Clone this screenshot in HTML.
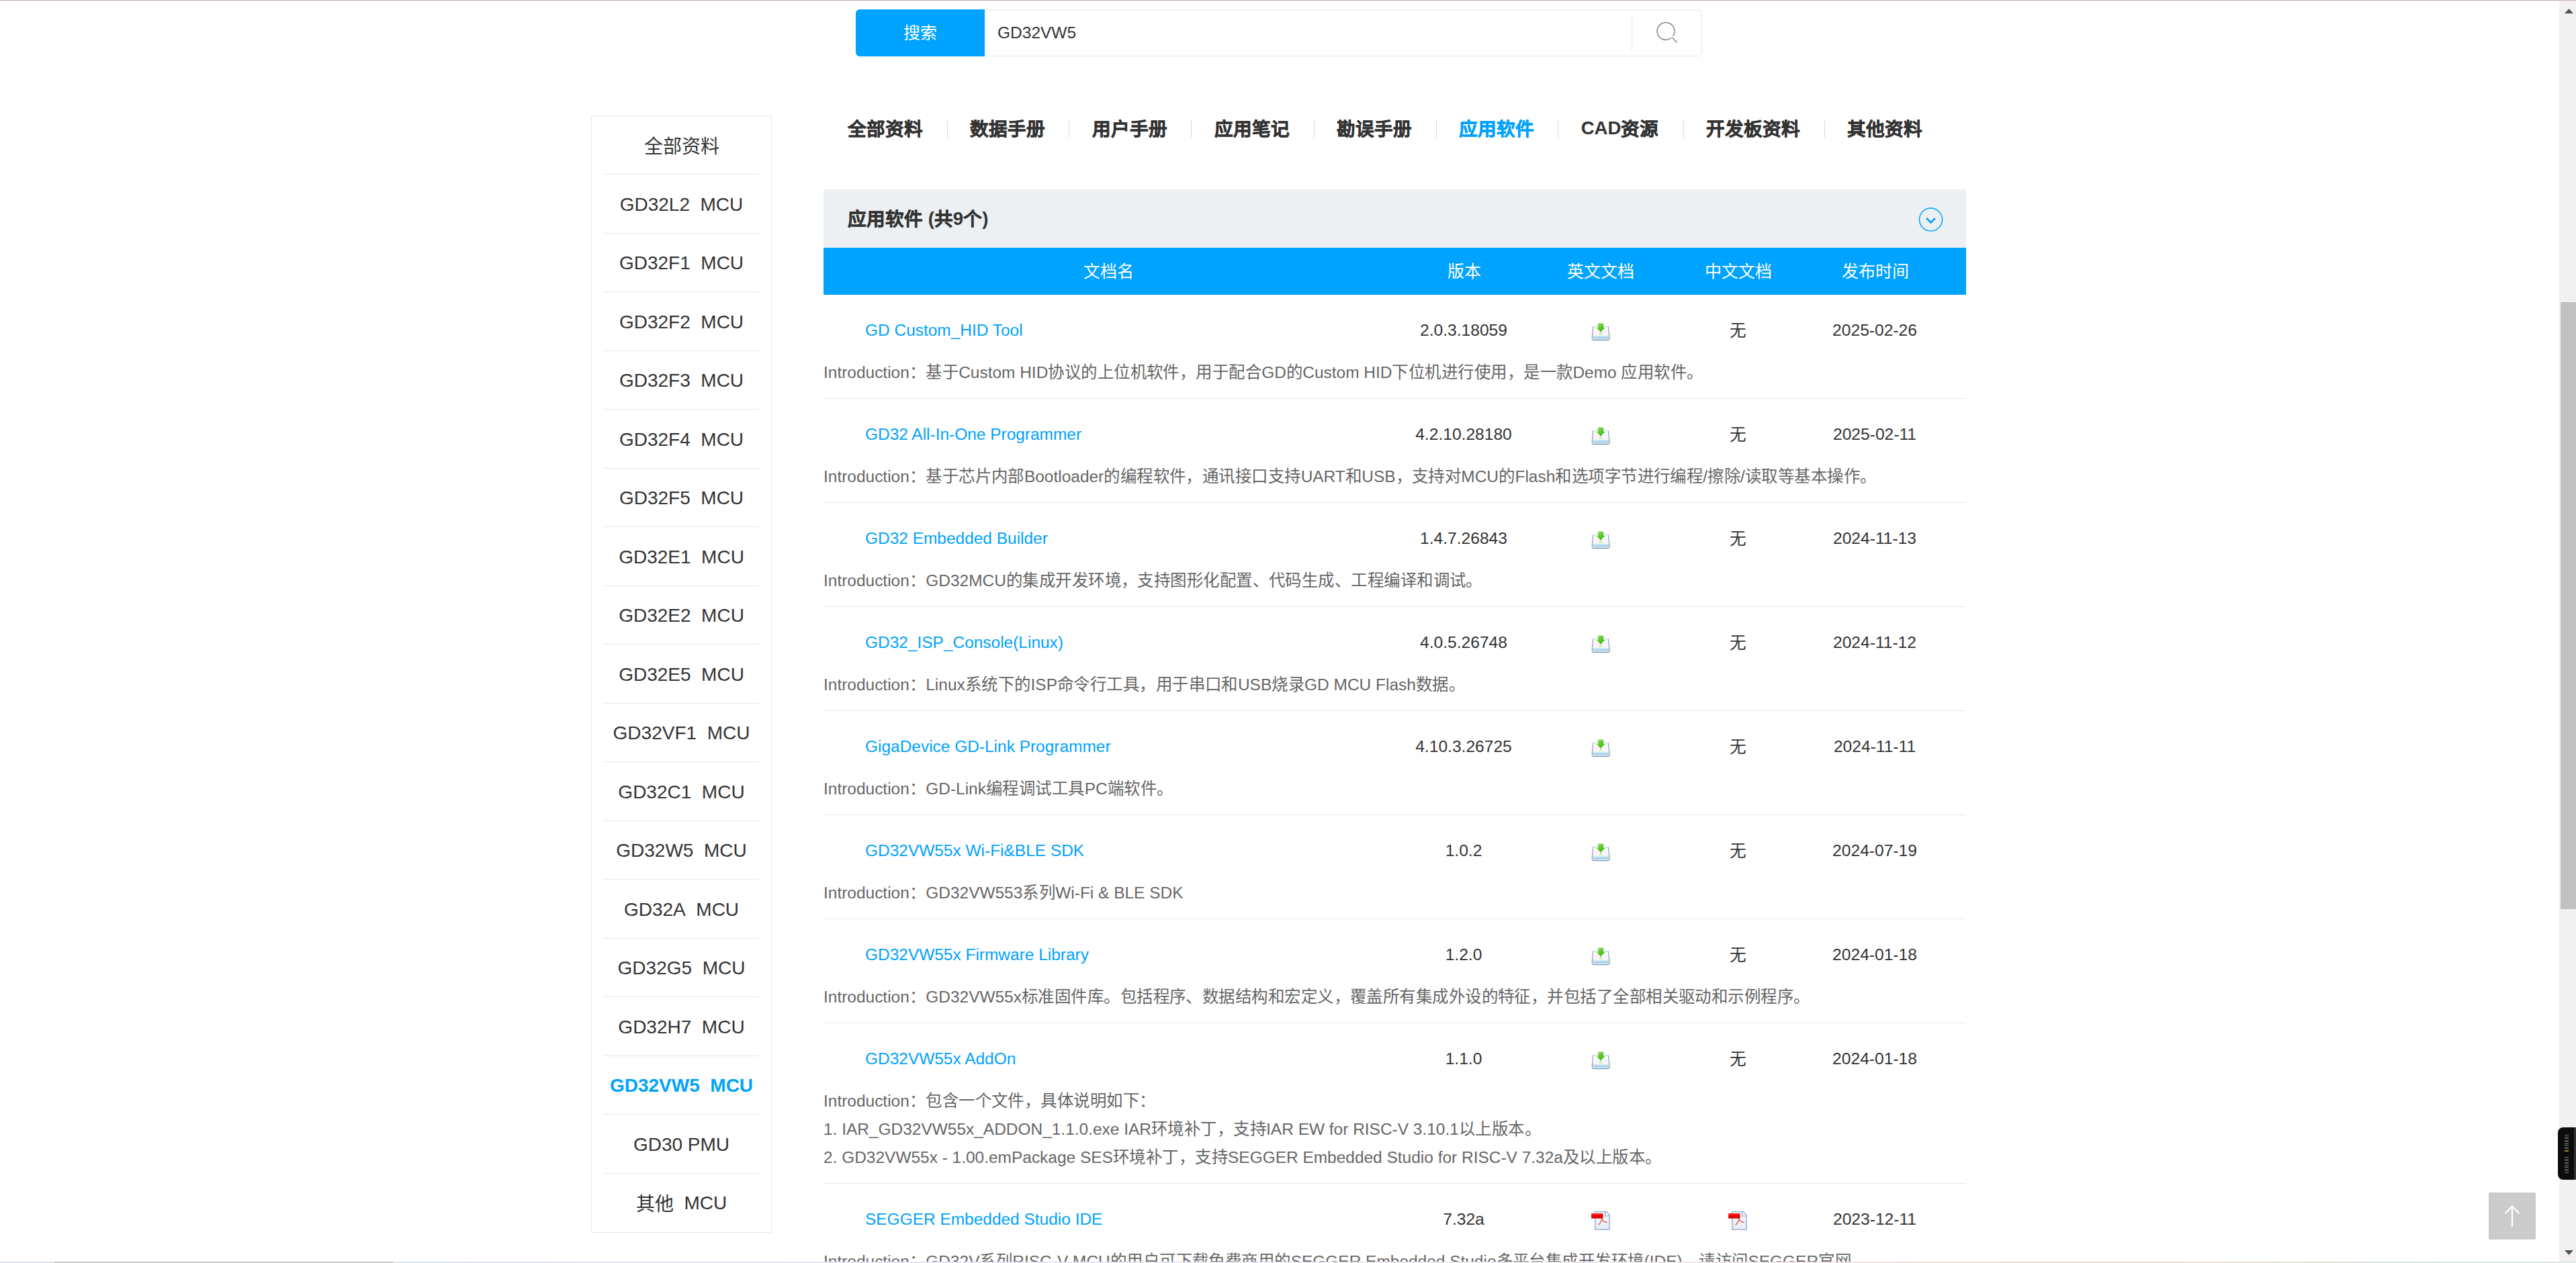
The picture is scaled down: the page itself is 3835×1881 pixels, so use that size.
<!DOCTYPE html>
<html lang="zh-CN"><head><meta charset="utf-8"><style>
html,body{margin:0;padding:0;}
body{width:3835px;height:1881px;overflow:hidden;position:relative;background:#fff;font-family:"Liberation Sans",sans-serif;color:#333;}
.a{position:absolute;white-space:nowrap;}
.c{text-align:center;}
</style></head><body>

<div class="a" style="left:1274px;top:14px;width:1258px;height:68px;border:1px solid #e6e6e6;border-radius:6px;"></div>
<div class="a" style="left:1274px;top:14px;width:192px;height:70px;background:#00a3ff;border-radius:6px 0 0 6px;"></div>
<div class="a c" style="left:1274px;top:14px;width:192px;height:70px;line-height:70px;font-size:25px;color:#fff">搜索</div>
<div class="a" style="left:1485px;top:14px;height:70px;line-height:70px;font-size:24.5px;color:#333">GD32VW5</div>
<div class="a" style="left:2429px;top:23px;width:1px;height:53px;background:#e6e6e6"></div>
<svg class="a" style="left:2450px;top:20px" width="60" height="60" viewBox="2450 20 60 60"><path d="M2490.6 53.7 A12.9 12.9 0 1 0 2488.1 56.4" fill="none" stroke="#8a8a8a" stroke-width="1.6"/><path d="M2489.2 55.8 L2496.6 63.3" stroke="#8a8a8a" stroke-width="1.6" fill="none"/></svg>
<div class="a" style="left:880px;top:172px;width:267px;height:1662px;border:1px solid #e6e6e6"></div>
<div class="a c" style="left:881px;top:173.0px;width:267px;height:87px;line-height:87.5px;font-size:28px;color:#333"><span style="position:relative;top:2px">全部资料</span></div>
<div class="a" style="left:898px;top:259px;width:232px;height:1px;background:#e6e6e6"></div>
<div class="a c" style="left:881px;top:260.5px;width:267px;height:87px;line-height:87.5px;font-size:28px;color:#333">GD32L2&nbsp; MCU</div>
<div class="a" style="left:898px;top:347px;width:232px;height:1px;background:#e6e6e6"></div>
<div class="a c" style="left:881px;top:348.0px;width:267px;height:87px;line-height:87.5px;font-size:28px;color:#333">GD32F1&nbsp; MCU</div>
<div class="a" style="left:898px;top:434px;width:232px;height:1px;background:#e6e6e6"></div>
<div class="a c" style="left:881px;top:435.5px;width:267px;height:87px;line-height:87.5px;font-size:28px;color:#333">GD32F2&nbsp; MCU</div>
<div class="a" style="left:898px;top:522px;width:232px;height:1px;background:#e6e6e6"></div>
<div class="a c" style="left:881px;top:523.0px;width:267px;height:87px;line-height:87.5px;font-size:28px;color:#333">GD32F3&nbsp; MCU</div>
<div class="a" style="left:898px;top:609px;width:232px;height:1px;background:#e6e6e6"></div>
<div class="a c" style="left:881px;top:610.5px;width:267px;height:87px;line-height:87.5px;font-size:28px;color:#333">GD32F4&nbsp; MCU</div>
<div class="a" style="left:898px;top:697px;width:232px;height:1px;background:#e6e6e6"></div>
<div class="a c" style="left:881px;top:698.0px;width:267px;height:87px;line-height:87.5px;font-size:28px;color:#333">GD32F5&nbsp; MCU</div>
<div class="a" style="left:898px;top:784px;width:232px;height:1px;background:#e6e6e6"></div>
<div class="a c" style="left:881px;top:785.5px;width:267px;height:87px;line-height:87.5px;font-size:28px;color:#333">GD32E1&nbsp; MCU</div>
<div class="a" style="left:898px;top:872px;width:232px;height:1px;background:#e6e6e6"></div>
<div class="a c" style="left:881px;top:873.0px;width:267px;height:87px;line-height:87.5px;font-size:28px;color:#333">GD32E2&nbsp; MCU</div>
<div class="a" style="left:898px;top:959px;width:232px;height:1px;background:#e6e6e6"></div>
<div class="a c" style="left:881px;top:960.5px;width:267px;height:87px;line-height:87.5px;font-size:28px;color:#333">GD32E5&nbsp; MCU</div>
<div class="a" style="left:898px;top:1047px;width:232px;height:1px;background:#e6e6e6"></div>
<div class="a c" style="left:881px;top:1048.0px;width:267px;height:87px;line-height:87.5px;font-size:28px;color:#333">GD32VF1&nbsp; MCU</div>
<div class="a" style="left:898px;top:1134px;width:232px;height:1px;background:#e6e6e6"></div>
<div class="a c" style="left:881px;top:1135.5px;width:267px;height:87px;line-height:87.5px;font-size:28px;color:#333">GD32C1&nbsp; MCU</div>
<div class="a" style="left:898px;top:1222px;width:232px;height:1px;background:#e6e6e6"></div>
<div class="a c" style="left:881px;top:1223.0px;width:267px;height:87px;line-height:87.5px;font-size:28px;color:#333">GD32W5&nbsp; MCU</div>
<div class="a" style="left:898px;top:1309px;width:232px;height:1px;background:#e6e6e6"></div>
<div class="a c" style="left:881px;top:1310.5px;width:267px;height:87px;line-height:87.5px;font-size:28px;color:#333">GD32A&nbsp; MCU</div>
<div class="a" style="left:898px;top:1397px;width:232px;height:1px;background:#e6e6e6"></div>
<div class="a c" style="left:881px;top:1398.0px;width:267px;height:87px;line-height:87.5px;font-size:28px;color:#333">GD32G5&nbsp; MCU</div>
<div class="a" style="left:898px;top:1484px;width:232px;height:1px;background:#e6e6e6"></div>
<div class="a c" style="left:881px;top:1485.5px;width:267px;height:87px;line-height:87.5px;font-size:28px;color:#333">GD32H7&nbsp; MCU</div>
<div class="a" style="left:898px;top:1572px;width:232px;height:1px;background:#e6e6e6"></div>
<div class="a c" style="left:881px;top:1573.0px;width:267px;height:87px;line-height:87.5px;font-size:28px;color:#00a2fc;font-weight:bold">GD32VW5&nbsp; MCU</div>
<div class="a" style="left:898px;top:1659px;width:232px;height:1px;background:#e6e6e6"></div>
<div class="a c" style="left:881px;top:1660.5px;width:267px;height:87px;line-height:87.5px;font-size:28px;color:#333">GD30 PMU</div>
<div class="a" style="left:898px;top:1747px;width:232px;height:1px;background:#e6e6e6"></div>
<div class="a c" style="left:881px;top:1748.0px;width:267px;height:87px;line-height:87.5px;font-size:28px;color:#333"><span style="position:relative;top:2px">其他</span>&nbsp; MCU</div>
<div class="a" style="left:1262px;top:171px;line-height:40px;font-size:27.6px;font-weight:bold;color:#333"><span style="-webkit-text-stroke:0.5px currentColor;position:relative;top:2px">全部资料</span></div>
<div class="a" style="left:1443.6px;top:171px;line-height:40px;font-size:27.6px;font-weight:bold;color:#333"><span style="-webkit-text-stroke:0.5px currentColor;position:relative;top:2px">数据手册</span></div>
<div class="a" style="left:1626px;top:171px;line-height:40px;font-size:27.6px;font-weight:bold;color:#333"><span style="-webkit-text-stroke:0.5px currentColor;position:relative;top:2px">用户手册</span></div>
<div class="a" style="left:1807.8px;top:171px;line-height:40px;font-size:27.6px;font-weight:bold;color:#333"><span style="-webkit-text-stroke:0.5px currentColor;position:relative;top:2px">应用笔记</span></div>
<div class="a" style="left:1989.6px;top:171px;line-height:40px;font-size:27.6px;font-weight:bold;color:#333"><span style="-webkit-text-stroke:0.5px currentColor;position:relative;top:2px">勘误手册</span></div>
<div class="a" style="left:2171.8px;top:171px;line-height:40px;font-size:27.6px;font-weight:bold;color:#00a2fc"><span style="-webkit-text-stroke:0.5px currentColor;position:relative;top:2px">应用软件</span></div>
<div class="a" style="left:2353.7px;top:171px;line-height:40px;font-size:27.6px;font-weight:bold;color:#333">CAD<span style="-webkit-text-stroke:0.5px currentColor;position:relative;top:2px">资源</span></div>
<div class="a" style="left:2540px;top:171px;line-height:40px;font-size:27.6px;font-weight:bold;color:#333"><span style="-webkit-text-stroke:0.5px currentColor;position:relative;top:2px">开发板资料</span></div>
<div class="a" style="left:2749.5px;top:171px;line-height:40px;font-size:27.6px;font-weight:bold;color:#333"><span style="-webkit-text-stroke:0.5px currentColor;position:relative;top:2px">其他资料</span></div>
<div class="a" style="left:1410px;top:179px;width:1px;height:26px;background:#d9d9d9"></div>
<div class="a" style="left:1591px;top:179px;width:1px;height:26px;background:#d9d9d9"></div>
<div class="a" style="left:1773px;top:179px;width:1px;height:26px;background:#d9d9d9"></div>
<div class="a" style="left:1956px;top:179px;width:1px;height:26px;background:#d9d9d9"></div>
<div class="a" style="left:2138px;top:179px;width:1px;height:26px;background:#d9d9d9"></div>
<div class="a" style="left:2319px;top:179px;width:1px;height:26px;background:#d9d9d9"></div>
<div class="a" style="left:2506px;top:179px;width:1px;height:26px;background:#d9d9d9"></div>
<div class="a" style="left:2716px;top:179px;width:1px;height:26px;background:#d9d9d9"></div>
<div class="a" style="left:1226px;top:282px;width:1701px;height:87px;background:#edf0f3"></div>
<div class="a" style="left:1262px;top:306px;line-height:40px;font-size:27.6px;font-weight:bold;color:#333"><span style="-webkit-text-stroke:0.5px currentColor;position:relative;top:0.5px">应用软件</span> (<span style="-webkit-text-stroke:0.5px currentColor;position:relative;top:0.5px">共</span>9<span style="-webkit-text-stroke:0.5px currentColor;position:relative;top:0.5px">个</span>)</div>
<svg class="a" style="left:2855px;top:308px" width="40" height="40" viewBox="0 0 40 40"><circle cx="19.5" cy="19" r="17" fill="none" stroke="#00a3ff" stroke-width="1.5"/><path d="M13 17 L19.5 23.5 L26 17" fill="none" stroke="#00a3ff" stroke-width="2.6"/></svg>
<div class="a" style="left:1226px;top:369px;width:1701px;height:70px;background:#00a3ff"></div>
<div class="a c" style="left:1500.5px;top:369px;width:300px;line-height:70px;font-size:25px;color:#fff">文档名</div>
<div class="a c" style="left:2029.5px;top:369px;width:300px;line-height:70px;font-size:25px;color:#fff">版本</div>
<div class="a c" style="left:2233px;top:369px;width:300px;line-height:70px;font-size:25px;color:#fff">英文文档</div>
<div class="a c" style="left:2438px;top:369px;width:300px;line-height:70px;font-size:25px;color:#fff">中文文档</div>
<div class="a c" style="left:2641.6px;top:369px;width:300px;line-height:70px;font-size:25px;color:#fff">发布时间</div>
<div class="a" style="left:1288px;top:471.7px;line-height:40px;font-size:24.46px;color:#00a2fc">GD Custom_HID Tool</div>
<div class="a c" style="left:2029px;top:471.7px;width:300px;line-height:40px;font-size:24.6px;color:#333">2.0.3.18059</div>
<div class="a" style="left:2360px;top:470px;width:45px;height:45px"><svg width="45" height="45" viewBox="0 0 45 45"><defs><linearGradient id="gA" x1="0" y1="0" x2="1" y2="1"><stop offset="0" stop-color="#a8ea6c"/><stop offset="0.5" stop-color="#5cc62c"/><stop offset="1" stop-color="#26a80c"/></linearGradient><linearGradient id="gT" x1="0" y1="0" x2="0" y2="1"><stop offset="0" stop-color="#ffffff"/><stop offset="1" stop-color="#eef1f4"/></linearGradient><linearGradient id="gR" x1="0" y1="0" x2="0" y2="1"><stop offset="0" stop-color="#6cc84a" stop-opacity="0.75"/><stop offset="1" stop-color="#c8eab0" stop-opacity="0"/></linearGradient></defs><path d="M12.3 16.6 H33.6 Q34.3 16.6 34.4 17.4 L36.2 33.6 Q36.4 36.6 33.4 36.6 H12.8 Q9.8 36.6 10.1 33.6 L11.6 17.4 Q11.7 16.6 12.3 16.6 Z" fill="url(#gT)"/><rect x="10.6" y="31" width="25.2" height="5" fill="#c8e6f4"/><path d="M11 31.2 H35.4" stroke="#a4d0e6" stroke-width="0.9"/><path d="M12.6 33.3 H33.8" stroke="#88b0cc" stroke-width="0.8"/><path d="M12.3 16.6 H33.6" stroke="#c4ccd8" stroke-width="1"/><path d="M33.6 16.6 Q34.3 16.6 34.4 17.4 L36.2 33.6 Q36.4 36.6 33.4 36.6 H12.8 Q9.8 36.6 10.1 33.6 L11.6 17.4 Q11.7 16.6 12.3 16.6" fill="none" stroke="#8497b0" stroke-width="1.1"/><path d="M16.5 23.4 H20 M26.5 23.4 H30" stroke="#f2b8b8" stroke-width="0.6"/><path d="M18 30.2 L23 24.6 L28 30.2 Z" fill="url(#gR)"/><path d="M18.9 11.4 H26.2 Q27.2 11.4 27.2 12.8 V18.4 L30.2 18.1 Q26.2 20.6 23 24.8 Q19.8 20.6 15.8 18.1 L18.9 18.4 Z" fill="url(#gA)"/></svg></div>
<div class="a c" style="left:2437px;top:471.7px;width:300px;line-height:40px;font-size:24.6px;color:#333"><span style="position:relative;top:1px">无</span></div>
<div class="a c" style="left:2641px;top:471.7px;width:300px;line-height:40px;font-size:24.6px;color:#333">2025-02-26</div>
<div class="a" style="left:1226px;top:533.7px;line-height:42px;font-size:24.46px;color:#666">Introduction<span style="letter-spacing:0.45px">：基于</span>Custom HID<span style="letter-spacing:0.45px">协议的上位机软件，用于配合</span>GD<span style="letter-spacing:0.45px">的</span>Custom HID<span style="letter-spacing:0.45px">下位机进行使用，是一款</span>Demo <span style="letter-spacing:0.45px">应用软件。</span></div>
<div class="a" style="left:1226px;top:593px;width:1701px;height:1px;background:#e6e6e6"></div>
<div class="a" style="left:1288px;top:626.7px;line-height:40px;font-size:24.46px;color:#00a2fc">GD32 All-In-One Programmer</div>
<div class="a c" style="left:2029px;top:626.7px;width:300px;line-height:40px;font-size:24.6px;color:#333">4.2.10.28180</div>
<div class="a" style="left:2360px;top:625px;width:45px;height:45px"><svg width="45" height="45" viewBox="0 0 45 45"><defs><linearGradient id="gA" x1="0" y1="0" x2="1" y2="1"><stop offset="0" stop-color="#a8ea6c"/><stop offset="0.5" stop-color="#5cc62c"/><stop offset="1" stop-color="#26a80c"/></linearGradient><linearGradient id="gT" x1="0" y1="0" x2="0" y2="1"><stop offset="0" stop-color="#ffffff"/><stop offset="1" stop-color="#eef1f4"/></linearGradient><linearGradient id="gR" x1="0" y1="0" x2="0" y2="1"><stop offset="0" stop-color="#6cc84a" stop-opacity="0.75"/><stop offset="1" stop-color="#c8eab0" stop-opacity="0"/></linearGradient></defs><path d="M12.3 16.6 H33.6 Q34.3 16.6 34.4 17.4 L36.2 33.6 Q36.4 36.6 33.4 36.6 H12.8 Q9.8 36.6 10.1 33.6 L11.6 17.4 Q11.7 16.6 12.3 16.6 Z" fill="url(#gT)"/><rect x="10.6" y="31" width="25.2" height="5" fill="#c8e6f4"/><path d="M11 31.2 H35.4" stroke="#a4d0e6" stroke-width="0.9"/><path d="M12.6 33.3 H33.8" stroke="#88b0cc" stroke-width="0.8"/><path d="M12.3 16.6 H33.6" stroke="#c4ccd8" stroke-width="1"/><path d="M33.6 16.6 Q34.3 16.6 34.4 17.4 L36.2 33.6 Q36.4 36.6 33.4 36.6 H12.8 Q9.8 36.6 10.1 33.6 L11.6 17.4 Q11.7 16.6 12.3 16.6" fill="none" stroke="#8497b0" stroke-width="1.1"/><path d="M16.5 23.4 H20 M26.5 23.4 H30" stroke="#f2b8b8" stroke-width="0.6"/><path d="M18 30.2 L23 24.6 L28 30.2 Z" fill="url(#gR)"/><path d="M18.9 11.4 H26.2 Q27.2 11.4 27.2 12.8 V18.4 L30.2 18.1 Q26.2 20.6 23 24.8 Q19.8 20.6 15.8 18.1 L18.9 18.4 Z" fill="url(#gA)"/></svg></div>
<div class="a c" style="left:2437px;top:626.7px;width:300px;line-height:40px;font-size:24.6px;color:#333"><span style="position:relative;top:1px">无</span></div>
<div class="a c" style="left:2641px;top:626.7px;width:300px;line-height:40px;font-size:24.6px;color:#333">2025-02-11</div>
<div class="a" style="left:1226px;top:688.7px;line-height:42px;font-size:24.46px;color:#666">Introduction<span style="letter-spacing:0.45px">：基于芯片内部</span>Bootloader<span style="letter-spacing:0.45px">的编程软件，通讯接口支持</span>UART<span style="letter-spacing:0.45px">和</span>USB<span style="letter-spacing:0.45px">，支持对</span>MCU<span style="letter-spacing:0.45px">的</span>Flash<span style="letter-spacing:0.45px">和选项字节进行编程</span>/<span style="letter-spacing:0.45px">擦除</span>/<span style="letter-spacing:0.45px">读取等基本操作。</span></div>
<div class="a" style="left:1226px;top:748px;width:1701px;height:1px;background:#e6e6e6"></div>
<div class="a" style="left:1288px;top:781.7px;line-height:40px;font-size:24.46px;color:#00a2fc">GD32 Embedded Builder</div>
<div class="a c" style="left:2029px;top:781.7px;width:300px;line-height:40px;font-size:24.6px;color:#333">1.4.7.26843</div>
<div class="a" style="left:2360px;top:780px;width:45px;height:45px"><svg width="45" height="45" viewBox="0 0 45 45"><defs><linearGradient id="gA" x1="0" y1="0" x2="1" y2="1"><stop offset="0" stop-color="#a8ea6c"/><stop offset="0.5" stop-color="#5cc62c"/><stop offset="1" stop-color="#26a80c"/></linearGradient><linearGradient id="gT" x1="0" y1="0" x2="0" y2="1"><stop offset="0" stop-color="#ffffff"/><stop offset="1" stop-color="#eef1f4"/></linearGradient><linearGradient id="gR" x1="0" y1="0" x2="0" y2="1"><stop offset="0" stop-color="#6cc84a" stop-opacity="0.75"/><stop offset="1" stop-color="#c8eab0" stop-opacity="0"/></linearGradient></defs><path d="M12.3 16.6 H33.6 Q34.3 16.6 34.4 17.4 L36.2 33.6 Q36.4 36.6 33.4 36.6 H12.8 Q9.8 36.6 10.1 33.6 L11.6 17.4 Q11.7 16.6 12.3 16.6 Z" fill="url(#gT)"/><rect x="10.6" y="31" width="25.2" height="5" fill="#c8e6f4"/><path d="M11 31.2 H35.4" stroke="#a4d0e6" stroke-width="0.9"/><path d="M12.6 33.3 H33.8" stroke="#88b0cc" stroke-width="0.8"/><path d="M12.3 16.6 H33.6" stroke="#c4ccd8" stroke-width="1"/><path d="M33.6 16.6 Q34.3 16.6 34.4 17.4 L36.2 33.6 Q36.4 36.6 33.4 36.6 H12.8 Q9.8 36.6 10.1 33.6 L11.6 17.4 Q11.7 16.6 12.3 16.6" fill="none" stroke="#8497b0" stroke-width="1.1"/><path d="M16.5 23.4 H20 M26.5 23.4 H30" stroke="#f2b8b8" stroke-width="0.6"/><path d="M18 30.2 L23 24.6 L28 30.2 Z" fill="url(#gR)"/><path d="M18.9 11.4 H26.2 Q27.2 11.4 27.2 12.8 V18.4 L30.2 18.1 Q26.2 20.6 23 24.8 Q19.8 20.6 15.8 18.1 L18.9 18.4 Z" fill="url(#gA)"/></svg></div>
<div class="a c" style="left:2437px;top:781.7px;width:300px;line-height:40px;font-size:24.6px;color:#333"><span style="position:relative;top:1px">无</span></div>
<div class="a c" style="left:2641px;top:781.7px;width:300px;line-height:40px;font-size:24.6px;color:#333">2024-11-13</div>
<div class="a" style="left:1226px;top:843.7px;line-height:42px;font-size:24.46px;color:#666">Introduction<span style="letter-spacing:0.45px">：</span>GD32MCU<span style="letter-spacing:0.45px">的集成开发环境，支持图形化配置、代码生成、工程编译和调试。</span></div>
<div class="a" style="left:1226px;top:903px;width:1701px;height:1px;background:#e6e6e6"></div>
<div class="a" style="left:1288px;top:936.7px;line-height:40px;font-size:24.46px;color:#00a2fc">GD32_ISP_Console(Linux)</div>
<div class="a c" style="left:2029px;top:936.7px;width:300px;line-height:40px;font-size:24.6px;color:#333">4.0.5.26748</div>
<div class="a" style="left:2360px;top:935px;width:45px;height:45px"><svg width="45" height="45" viewBox="0 0 45 45"><defs><linearGradient id="gA" x1="0" y1="0" x2="1" y2="1"><stop offset="0" stop-color="#a8ea6c"/><stop offset="0.5" stop-color="#5cc62c"/><stop offset="1" stop-color="#26a80c"/></linearGradient><linearGradient id="gT" x1="0" y1="0" x2="0" y2="1"><stop offset="0" stop-color="#ffffff"/><stop offset="1" stop-color="#eef1f4"/></linearGradient><linearGradient id="gR" x1="0" y1="0" x2="0" y2="1"><stop offset="0" stop-color="#6cc84a" stop-opacity="0.75"/><stop offset="1" stop-color="#c8eab0" stop-opacity="0"/></linearGradient></defs><path d="M12.3 16.6 H33.6 Q34.3 16.6 34.4 17.4 L36.2 33.6 Q36.4 36.6 33.4 36.6 H12.8 Q9.8 36.6 10.1 33.6 L11.6 17.4 Q11.7 16.6 12.3 16.6 Z" fill="url(#gT)"/><rect x="10.6" y="31" width="25.2" height="5" fill="#c8e6f4"/><path d="M11 31.2 H35.4" stroke="#a4d0e6" stroke-width="0.9"/><path d="M12.6 33.3 H33.8" stroke="#88b0cc" stroke-width="0.8"/><path d="M12.3 16.6 H33.6" stroke="#c4ccd8" stroke-width="1"/><path d="M33.6 16.6 Q34.3 16.6 34.4 17.4 L36.2 33.6 Q36.4 36.6 33.4 36.6 H12.8 Q9.8 36.6 10.1 33.6 L11.6 17.4 Q11.7 16.6 12.3 16.6" fill="none" stroke="#8497b0" stroke-width="1.1"/><path d="M16.5 23.4 H20 M26.5 23.4 H30" stroke="#f2b8b8" stroke-width="0.6"/><path d="M18 30.2 L23 24.6 L28 30.2 Z" fill="url(#gR)"/><path d="M18.9 11.4 H26.2 Q27.2 11.4 27.2 12.8 V18.4 L30.2 18.1 Q26.2 20.6 23 24.8 Q19.8 20.6 15.8 18.1 L18.9 18.4 Z" fill="url(#gA)"/></svg></div>
<div class="a c" style="left:2437px;top:936.7px;width:300px;line-height:40px;font-size:24.6px;color:#333"><span style="position:relative;top:1px">无</span></div>
<div class="a c" style="left:2641px;top:936.7px;width:300px;line-height:40px;font-size:24.6px;color:#333">2024-11-12</div>
<div class="a" style="left:1226px;top:998.7px;line-height:42px;font-size:24.46px;color:#666">Introduction<span style="letter-spacing:0.45px">：</span>Linux<span style="letter-spacing:0.45px">系统下的</span>ISP<span style="letter-spacing:0.45px">命令行工具，用于串口和</span>USB<span style="letter-spacing:0.45px">烧录</span>GD MCU Flash<span style="letter-spacing:0.45px">数据。</span></div>
<div class="a" style="left:1226px;top:1058px;width:1701px;height:1px;background:#e6e6e6"></div>
<div class="a" style="left:1288px;top:1091.7px;line-height:40px;font-size:24.46px;color:#00a2fc">GigaDevice GD-Link Programmer</div>
<div class="a c" style="left:2029px;top:1091.7px;width:300px;line-height:40px;font-size:24.6px;color:#333">4.10.3.26725</div>
<div class="a" style="left:2360px;top:1090px;width:45px;height:45px"><svg width="45" height="45" viewBox="0 0 45 45"><defs><linearGradient id="gA" x1="0" y1="0" x2="1" y2="1"><stop offset="0" stop-color="#a8ea6c"/><stop offset="0.5" stop-color="#5cc62c"/><stop offset="1" stop-color="#26a80c"/></linearGradient><linearGradient id="gT" x1="0" y1="0" x2="0" y2="1"><stop offset="0" stop-color="#ffffff"/><stop offset="1" stop-color="#eef1f4"/></linearGradient><linearGradient id="gR" x1="0" y1="0" x2="0" y2="1"><stop offset="0" stop-color="#6cc84a" stop-opacity="0.75"/><stop offset="1" stop-color="#c8eab0" stop-opacity="0"/></linearGradient></defs><path d="M12.3 16.6 H33.6 Q34.3 16.6 34.4 17.4 L36.2 33.6 Q36.4 36.6 33.4 36.6 H12.8 Q9.8 36.6 10.1 33.6 L11.6 17.4 Q11.7 16.6 12.3 16.6 Z" fill="url(#gT)"/><rect x="10.6" y="31" width="25.2" height="5" fill="#c8e6f4"/><path d="M11 31.2 H35.4" stroke="#a4d0e6" stroke-width="0.9"/><path d="M12.6 33.3 H33.8" stroke="#88b0cc" stroke-width="0.8"/><path d="M12.3 16.6 H33.6" stroke="#c4ccd8" stroke-width="1"/><path d="M33.6 16.6 Q34.3 16.6 34.4 17.4 L36.2 33.6 Q36.4 36.6 33.4 36.6 H12.8 Q9.8 36.6 10.1 33.6 L11.6 17.4 Q11.7 16.6 12.3 16.6" fill="none" stroke="#8497b0" stroke-width="1.1"/><path d="M16.5 23.4 H20 M26.5 23.4 H30" stroke="#f2b8b8" stroke-width="0.6"/><path d="M18 30.2 L23 24.6 L28 30.2 Z" fill="url(#gR)"/><path d="M18.9 11.4 H26.2 Q27.2 11.4 27.2 12.8 V18.4 L30.2 18.1 Q26.2 20.6 23 24.8 Q19.8 20.6 15.8 18.1 L18.9 18.4 Z" fill="url(#gA)"/></svg></div>
<div class="a c" style="left:2437px;top:1091.7px;width:300px;line-height:40px;font-size:24.6px;color:#333"><span style="position:relative;top:1px">无</span></div>
<div class="a c" style="left:2641px;top:1091.7px;width:300px;line-height:40px;font-size:24.6px;color:#333">2024-11-11</div>
<div class="a" style="left:1226px;top:1153.7px;line-height:42px;font-size:24.46px;color:#666">Introduction<span style="letter-spacing:0.45px">：</span>GD-Link<span style="letter-spacing:0.45px">编程调试工具</span>PC<span style="letter-spacing:0.45px">端软件。</span></div>
<div class="a" style="left:1226px;top:1213px;width:1701px;height:1px;background:#e6e6e6"></div>
<div class="a" style="left:1288px;top:1246.7px;line-height:40px;font-size:24.46px;color:#00a2fc">GD32VW55x Wi-Fi&amp;BLE SDK</div>
<div class="a c" style="left:2029px;top:1246.7px;width:300px;line-height:40px;font-size:24.6px;color:#333">1.0.2</div>
<div class="a" style="left:2360px;top:1245px;width:45px;height:45px"><svg width="45" height="45" viewBox="0 0 45 45"><defs><linearGradient id="gA" x1="0" y1="0" x2="1" y2="1"><stop offset="0" stop-color="#a8ea6c"/><stop offset="0.5" stop-color="#5cc62c"/><stop offset="1" stop-color="#26a80c"/></linearGradient><linearGradient id="gT" x1="0" y1="0" x2="0" y2="1"><stop offset="0" stop-color="#ffffff"/><stop offset="1" stop-color="#eef1f4"/></linearGradient><linearGradient id="gR" x1="0" y1="0" x2="0" y2="1"><stop offset="0" stop-color="#6cc84a" stop-opacity="0.75"/><stop offset="1" stop-color="#c8eab0" stop-opacity="0"/></linearGradient></defs><path d="M12.3 16.6 H33.6 Q34.3 16.6 34.4 17.4 L36.2 33.6 Q36.4 36.6 33.4 36.6 H12.8 Q9.8 36.6 10.1 33.6 L11.6 17.4 Q11.7 16.6 12.3 16.6 Z" fill="url(#gT)"/><rect x="10.6" y="31" width="25.2" height="5" fill="#c8e6f4"/><path d="M11 31.2 H35.4" stroke="#a4d0e6" stroke-width="0.9"/><path d="M12.6 33.3 H33.8" stroke="#88b0cc" stroke-width="0.8"/><path d="M12.3 16.6 H33.6" stroke="#c4ccd8" stroke-width="1"/><path d="M33.6 16.6 Q34.3 16.6 34.4 17.4 L36.2 33.6 Q36.4 36.6 33.4 36.6 H12.8 Q9.8 36.6 10.1 33.6 L11.6 17.4 Q11.7 16.6 12.3 16.6" fill="none" stroke="#8497b0" stroke-width="1.1"/><path d="M16.5 23.4 H20 M26.5 23.4 H30" stroke="#f2b8b8" stroke-width="0.6"/><path d="M18 30.2 L23 24.6 L28 30.2 Z" fill="url(#gR)"/><path d="M18.9 11.4 H26.2 Q27.2 11.4 27.2 12.8 V18.4 L30.2 18.1 Q26.2 20.6 23 24.8 Q19.8 20.6 15.8 18.1 L18.9 18.4 Z" fill="url(#gA)"/></svg></div>
<div class="a c" style="left:2437px;top:1246.7px;width:300px;line-height:40px;font-size:24.6px;color:#333"><span style="position:relative;top:1px">无</span></div>
<div class="a c" style="left:2641px;top:1246.7px;width:300px;line-height:40px;font-size:24.6px;color:#333">2024-07-19</div>
<div class="a" style="left:1226px;top:1308.7px;line-height:42px;font-size:24.46px;color:#666">Introduction<span style="letter-spacing:0.45px">：</span>GD32VW553<span style="letter-spacing:0.45px">系列</span>Wi-Fi &amp; BLE SDK</div>
<div class="a" style="left:1226px;top:1368px;width:1701px;height:1px;background:#e6e6e6"></div>
<div class="a" style="left:1288px;top:1401.7px;line-height:40px;font-size:24.46px;color:#00a2fc">GD32VW55x Firmware Library</div>
<div class="a c" style="left:2029px;top:1401.7px;width:300px;line-height:40px;font-size:24.6px;color:#333">1.2.0</div>
<div class="a" style="left:2360px;top:1400px;width:45px;height:45px"><svg width="45" height="45" viewBox="0 0 45 45"><defs><linearGradient id="gA" x1="0" y1="0" x2="1" y2="1"><stop offset="0" stop-color="#a8ea6c"/><stop offset="0.5" stop-color="#5cc62c"/><stop offset="1" stop-color="#26a80c"/></linearGradient><linearGradient id="gT" x1="0" y1="0" x2="0" y2="1"><stop offset="0" stop-color="#ffffff"/><stop offset="1" stop-color="#eef1f4"/></linearGradient><linearGradient id="gR" x1="0" y1="0" x2="0" y2="1"><stop offset="0" stop-color="#6cc84a" stop-opacity="0.75"/><stop offset="1" stop-color="#c8eab0" stop-opacity="0"/></linearGradient></defs><path d="M12.3 16.6 H33.6 Q34.3 16.6 34.4 17.4 L36.2 33.6 Q36.4 36.6 33.4 36.6 H12.8 Q9.8 36.6 10.1 33.6 L11.6 17.4 Q11.7 16.6 12.3 16.6 Z" fill="url(#gT)"/><rect x="10.6" y="31" width="25.2" height="5" fill="#c8e6f4"/><path d="M11 31.2 H35.4" stroke="#a4d0e6" stroke-width="0.9"/><path d="M12.6 33.3 H33.8" stroke="#88b0cc" stroke-width="0.8"/><path d="M12.3 16.6 H33.6" stroke="#c4ccd8" stroke-width="1"/><path d="M33.6 16.6 Q34.3 16.6 34.4 17.4 L36.2 33.6 Q36.4 36.6 33.4 36.6 H12.8 Q9.8 36.6 10.1 33.6 L11.6 17.4 Q11.7 16.6 12.3 16.6" fill="none" stroke="#8497b0" stroke-width="1.1"/><path d="M16.5 23.4 H20 M26.5 23.4 H30" stroke="#f2b8b8" stroke-width="0.6"/><path d="M18 30.2 L23 24.6 L28 30.2 Z" fill="url(#gR)"/><path d="M18.9 11.4 H26.2 Q27.2 11.4 27.2 12.8 V18.4 L30.2 18.1 Q26.2 20.6 23 24.8 Q19.8 20.6 15.8 18.1 L18.9 18.4 Z" fill="url(#gA)"/></svg></div>
<div class="a c" style="left:2437px;top:1401.7px;width:300px;line-height:40px;font-size:24.6px;color:#333"><span style="position:relative;top:1px">无</span></div>
<div class="a c" style="left:2641px;top:1401.7px;width:300px;line-height:40px;font-size:24.6px;color:#333">2024-01-18</div>
<div class="a" style="left:1226px;top:1463.7px;line-height:42px;font-size:24.46px;color:#666">Introduction<span style="letter-spacing:0.45px">：</span>GD32VW55x<span style="letter-spacing:0.45px">标准固件库。包括程序、数据结构和宏定义，覆盖所有集成外设的特征，并包括了全部相关驱动和示例程序。</span></div>
<div class="a" style="left:1226px;top:1523px;width:1701px;height:1px;background:#e6e6e6"></div>
<div class="a" style="left:1288px;top:1556.7px;line-height:40px;font-size:24.46px;color:#00a2fc">GD32VW55x AddOn</div>
<div class="a c" style="left:2029px;top:1556.7px;width:300px;line-height:40px;font-size:24.6px;color:#333">1.1.0</div>
<div class="a" style="left:2360px;top:1555px;width:45px;height:45px"><svg width="45" height="45" viewBox="0 0 45 45"><defs><linearGradient id="gA" x1="0" y1="0" x2="1" y2="1"><stop offset="0" stop-color="#a8ea6c"/><stop offset="0.5" stop-color="#5cc62c"/><stop offset="1" stop-color="#26a80c"/></linearGradient><linearGradient id="gT" x1="0" y1="0" x2="0" y2="1"><stop offset="0" stop-color="#ffffff"/><stop offset="1" stop-color="#eef1f4"/></linearGradient><linearGradient id="gR" x1="0" y1="0" x2="0" y2="1"><stop offset="0" stop-color="#6cc84a" stop-opacity="0.75"/><stop offset="1" stop-color="#c8eab0" stop-opacity="0"/></linearGradient></defs><path d="M12.3 16.6 H33.6 Q34.3 16.6 34.4 17.4 L36.2 33.6 Q36.4 36.6 33.4 36.6 H12.8 Q9.8 36.6 10.1 33.6 L11.6 17.4 Q11.7 16.6 12.3 16.6 Z" fill="url(#gT)"/><rect x="10.6" y="31" width="25.2" height="5" fill="#c8e6f4"/><path d="M11 31.2 H35.4" stroke="#a4d0e6" stroke-width="0.9"/><path d="M12.6 33.3 H33.8" stroke="#88b0cc" stroke-width="0.8"/><path d="M12.3 16.6 H33.6" stroke="#c4ccd8" stroke-width="1"/><path d="M33.6 16.6 Q34.3 16.6 34.4 17.4 L36.2 33.6 Q36.4 36.6 33.4 36.6 H12.8 Q9.8 36.6 10.1 33.6 L11.6 17.4 Q11.7 16.6 12.3 16.6" fill="none" stroke="#8497b0" stroke-width="1.1"/><path d="M16.5 23.4 H20 M26.5 23.4 H30" stroke="#f2b8b8" stroke-width="0.6"/><path d="M18 30.2 L23 24.6 L28 30.2 Z" fill="url(#gR)"/><path d="M18.9 11.4 H26.2 Q27.2 11.4 27.2 12.8 V18.4 L30.2 18.1 Q26.2 20.6 23 24.8 Q19.8 20.6 15.8 18.1 L18.9 18.4 Z" fill="url(#gA)"/></svg></div>
<div class="a c" style="left:2437px;top:1556.7px;width:300px;line-height:40px;font-size:24.6px;color:#333"><span style="position:relative;top:1px">无</span></div>
<div class="a c" style="left:2641px;top:1556.7px;width:300px;line-height:40px;font-size:24.6px;color:#333">2024-01-18</div>
<div class="a" style="left:1226px;top:1618.7px;line-height:42px;font-size:24.46px;color:#666">Introduction<span style="letter-spacing:0.45px">：包含一个文件，具体说明如下：</span><br>1. IAR_GD32VW55x_ADDON_1.1.0.exe IAR<span style="letter-spacing:0.45px">环境补丁，支持</span>IAR EW for RISC-V 3.10.1<span style="letter-spacing:0.45px">以上版本。</span><br>2. GD32VW55x - 1.00.emPackage SES<span style="letter-spacing:0.45px">环境补丁，支持</span>SEGGER Embedded Studio for RISC-V 7.32a<span style="letter-spacing:0.45px">及以上版本。</span></div>
<div class="a" style="left:1226px;top:1762px;width:1701px;height:1px;background:#e6e6e6"></div>
<div class="a" style="left:1288px;top:1795.7px;line-height:40px;font-size:24.46px;color:#00a2fc">SEGGER Embedded Studio IDE</div>
<div class="a c" style="left:2029px;top:1795.7px;width:300px;line-height:40px;font-size:24.6px;color:#333">7.32a</div>
<div class="a" style="left:2360px;top:1790px;width:45px;height:45px"><svg width="45" height="45" viewBox="0 0 45 45"><defs><linearGradient id="gP" x1="0" y1="0" x2="0" y2="1"><stop offset="0" stop-color="#ff2a2a"/><stop offset="0.45" stop-color="#f00000"/><stop offset="1" stop-color="#c40000"/></linearGradient><linearGradient id="gD" x1="0" y1="0" x2="0" y2="1"><stop offset="0" stop-color="#f4f8fc"/><stop offset="1" stop-color="#e6edf6"/></linearGradient></defs><path d="M14.9 14.6 H31.4 L36.1 19.5 V41.1 H14.9 Z" fill="url(#gD)" stroke="#8ba6cc" stroke-width="1.3"/><path d="M29.6 14.8 V21 H35.9" fill="#f7fafd" stroke="#8ba6cc" stroke-width="1.2"/><path d="M25 24.5 Q24.5 29.5 21.5 32.5 Q19.5 34.6 19.8 33.8 M25.6 26.2 Q26.5 30 32.8 30.6" fill="none" stroke="#ec3b30" stroke-width="1.2"/><rect x="9.1" y="17.1" width="17.4" height="7.5" fill="url(#gP)"/></svg></div>
<div class="a" style="left:2563.5px;top:1790px;width:45px;height:45px"><svg width="45" height="45" viewBox="0 0 45 45"><defs><linearGradient id="gP" x1="0" y1="0" x2="0" y2="1"><stop offset="0" stop-color="#ff2a2a"/><stop offset="0.45" stop-color="#f00000"/><stop offset="1" stop-color="#c40000"/></linearGradient><linearGradient id="gD" x1="0" y1="0" x2="0" y2="1"><stop offset="0" stop-color="#f4f8fc"/><stop offset="1" stop-color="#e6edf6"/></linearGradient></defs><path d="M14.9 14.6 H31.4 L36.1 19.5 V41.1 H14.9 Z" fill="url(#gD)" stroke="#8ba6cc" stroke-width="1.3"/><path d="M29.6 14.8 V21 H35.9" fill="#f7fafd" stroke="#8ba6cc" stroke-width="1.2"/><path d="M25 24.5 Q24.5 29.5 21.5 32.5 Q19.5 34.6 19.8 33.8 M25.6 26.2 Q26.5 30 32.8 30.6" fill="none" stroke="#ec3b30" stroke-width="1.2"/><rect x="9.1" y="17.1" width="17.4" height="7.5" fill="url(#gP)"/></svg></div>
<div class="a c" style="left:2641px;top:1795.7px;width:300px;line-height:40px;font-size:24.6px;color:#333">2023-12-11</div>
<div class="a" style="left:1226px;top:1857.7px;line-height:42px;font-size:24.46px;color:#666">Introduction<span style="letter-spacing:0.45px">：</span>GD32V<span style="letter-spacing:0.45px">系列</span>RISC-V MCU<span style="letter-spacing:0.45px">的用户可下载免费商用的</span>SEGGER Embedded Studio<span style="letter-spacing:0.45px">多平台集成开发环境</span>(IDE)<span style="letter-spacing:0.45px">，请访问</span>SEGGER<span style="letter-spacing:0.45px">官网</span></div>
<div class="a" style="left:1226px;top:1917px;width:1701px;height:1px;background:#e6e6e6"></div>
<div class="a" style="left:3810px;top:1px;width:25px;height:1878px;background:#f1f1f1"></div>
<div class="a" style="left:3812px;top:450px;width:23px;height:904px;background:#c1c1c1"></div>
<svg class="a" style="left:3810px;top:0" width="25" height="30"><path d="M8 20 L21 20 L14.5 13 Z" fill="#505050"/></svg>
<svg class="a" style="left:3810px;top:1850px" width="25" height="30"><path d="M8 12 L21 12 L14.5 19 Z" fill="#505050"/></svg>
<div class="a" style="left:0;top:1879px;width:3835px;height:2px;background:linear-gradient(90deg,#dde2ee 0,#dde2ee 81px,#c8c8c8 81px,#c8c8c8 585px,#dde3ee 585px,#e8e6ee 1500px,#ede8ee 2400px,#eadfd8 3000px,#e6e2d8 3400px,#d8e6e2 3600px,#e0e6e4 3835px)"></div>
<div class="a" style="left:3808px;top:1679px;width:40px;height:78px;background:#0c0c0c;border-radius:8px 0 0 8px"></div>
<div class="a" style="left:3818px;top:1690.0px;width:6px;height:1px;background:#777"></div><div class="a" style="left:3818px;top:1692.5px;width:6px;height:1px;background:#777"></div><div class="a" style="left:3818px;top:1695.0px;width:6px;height:1px;background:#777"></div><div class="a" style="left:3818px;top:1697.5px;width:6px;height:1px;background:#777"></div><div class="a" style="left:3818px;top:1700.0px;width:6px;height:1px;background:#777"></div><div class="a" style="left:3818px;top:1702.5px;width:6px;height:1px;background:#777"></div><div class="a" style="left:3818px;top:1705.0px;width:6px;height:1px;background:#777"></div><div class="a" style="left:3818px;top:1707.5px;width:6px;height:1px;background:#777"></div><div class="a" style="left:3818px;top:1710.0px;width:6px;height:1px;background:#777"></div><div class="a" style="left:3818px;top:1712.5px;width:6px;height:1px;background:#777"></div><div class="a" style="left:3818px;top:1714px;width:6px;height:1px;background:#d08a20"></div><div class="a" style="left:3818px;top:1723.0px;width:6px;height:1px;background:#777"></div><div class="a" style="left:3818px;top:1725.5px;width:6px;height:1px;background:#777"></div><div class="a" style="left:3818px;top:1728.0px;width:6px;height:1px;background:#777"></div><div class="a" style="left:3818px;top:1730.5px;width:6px;height:1px;background:#777"></div><div class="a" style="left:3818px;top:1733.0px;width:6px;height:1px;background:#777"></div><div class="a" style="left:3818px;top:1735.5px;width:6px;height:1px;background:#777"></div><div class="a" style="left:3818px;top:1738.0px;width:6px;height:1px;background:#777"></div><div class="a" style="left:3818px;top:1740.5px;width:6px;height:1px;background:#777"></div><div class="a" style="left:3818px;top:1743.0px;width:6px;height:1px;background:#777"></div><div class="a" style="left:3818px;top:1745.5px;width:6px;height:1px;background:#777"></div>
<div class="a" style="left:3832px;top:1679px;width:3px;height:78px;background:#333"></div>
<div class="a" style="left:3705px;top:1776px;width:70px;height:70px;background:#cbcbcb;border-radius:2px"></div>
<svg class="a" style="left:3705px;top:1776px" width="70" height="70"><path d="M35 20.5 V51" stroke="#fff" stroke-width="2.4"/><path d="M24.5 31 L35 20.5 L45.5 31" stroke="#fff" stroke-width="2.4" fill="none"/></svg>
<div class="a" style="left:0;top:0;width:3835px;height:1px;background:#c7b0aa"></div>
</body></html>
